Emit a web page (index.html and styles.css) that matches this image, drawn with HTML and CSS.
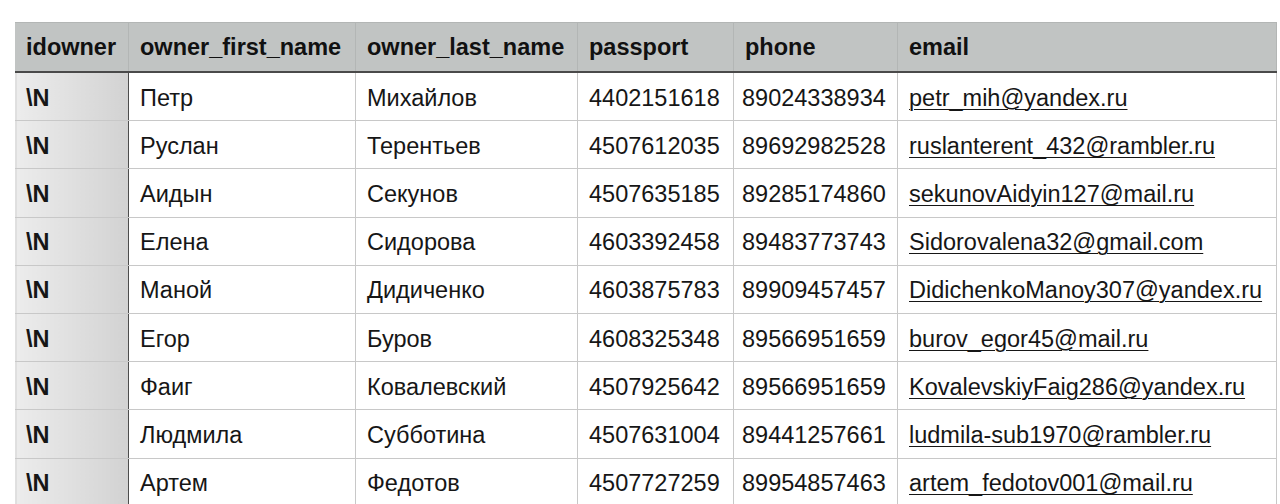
FILE: index.html
```html
<!DOCTYPE html>
<html lang="ru">
<head>
<meta charset="utf-8">
<title>owners</title>
<link rel="stylesheet" href="styles.css">
</head>
<body>
<table class="grid">
  <colgroup>
    <col class="c1"><col class="c2"><col class="c3"><col class="c4"><col class="c5"><col class="c6">
  </colgroup>
  <thead>
    <tr><th>idowner</th><th>owner_first_name</th><th>owner_last_name</th><th>passport</th><th>phone</th><th>email</th></tr>
  </thead>
  <tbody>
    <tr><td class="id">\N</td><td>Петр</td><td>Михайлов</td><td>4402151618</td><td class="ph">89024338934</td><td class="mail">petr_mih@yandex.ru</td></tr>
    <tr><td class="id">\N</td><td>Руслан</td><td>Терентьев</td><td>4507612035</td><td class="ph">89692982528</td><td class="mail">ruslanterent_432@rambler.ru</td></tr>
    <tr><td class="id">\N</td><td>Аидын</td><td>Секунов</td><td>4507635185</td><td class="ph">89285174860</td><td class="mail">sekunovAidyin127@mail.ru</td></tr>
    <tr><td class="id">\N</td><td>Елена</td><td>Сидорова</td><td>4603392458</td><td class="ph">89483773743</td><td class="mail">Sidorovalena32@gmail.com</td></tr>
    <tr><td class="id">\N</td><td>Маной</td><td>Дидиченко</td><td>4603875783</td><td class="ph">89909457457</td><td class="mail">DidichenkoManoy307@yandex.ru</td></tr>
    <tr><td class="id">\N</td><td>Егор</td><td>Буров</td><td>4608325348</td><td class="ph">89566951659</td><td class="mail">burov_egor45@mail.ru</td></tr>
    <tr><td class="id">\N</td><td>Фаиг</td><td>Ковалевский</td><td>4507925642</td><td class="ph">89566951659</td><td class="mail">KovalevskiyFaig286@yandex.ru</td></tr>
    <tr><td class="id">\N</td><td>Людмила</td><td>Субботина</td><td>4507631004</td><td class="ph">89441257661</td><td class="mail">ludmila-sub1970@rambler.ru</td></tr>
    <tr><td class="id">\N</td><td>Артем</td><td>Федотов</td><td>4507727259</td><td class="ph">89954857463</td><td class="mail">artem_fedotov001@mail.ru</td></tr>
  </tbody>
</table>
</body>
</html>
```

FILE: styles.css
```css
html, body {
  margin: 0;
  background: #ffffff;
}
body {
  padding: 22px 0 0 15px;
  overflow: hidden;
  height: 504px;
  box-sizing: border-box;
  font-family: "Liberation Sans", Arial, Helvetica, sans-serif;
  color: #161616;
}
.grid {
  border-collapse: collapse;
  table-layout: fixed;
  width: 1261px;
  font-size: 23.5px;
}
.c1 { width: 113px; }
.c2 { width: 227px; }
.c3 { width: 222px; }
.c4 { width: 156px; }
.c5 { width: 164px; }
.c6 { width: 379px; }
.grid th,
.grid td {
  text-align: left;
  white-space: nowrap;
  overflow: hidden;
  padding: 0 0 0 11px;
  border: 1px solid #c8c8c8;
}
.grid td {
  padding-top: 3px;
  height: 44.2px;
}
.grid th {
  background: #c1c4c3;
  font-weight: bold;
  height: 48px;
  border-color: #b3b6b5;
  border-bottom: 2px solid #4a4a4a;
  color: #111;
}
.grid th:first-child {
  border-left-color: #c1c4c3;
  padding-left: 10px;
}
.grid td.id {
  font-weight: bold;
  padding-left: 10px;
  background: linear-gradient(to right, #ececec, #dedede 55%, #d2d2d2);
  border-right: 1px solid #4d4d4d;
  border-left: 1px solid #e0e0e0;
}
.grid td.ph {
  padding-left: 8px;
}
.grid td.mail {
  text-decoration: underline;
  text-underline-offset: 3px;
  text-decoration-thickness: 1px;
}
```
